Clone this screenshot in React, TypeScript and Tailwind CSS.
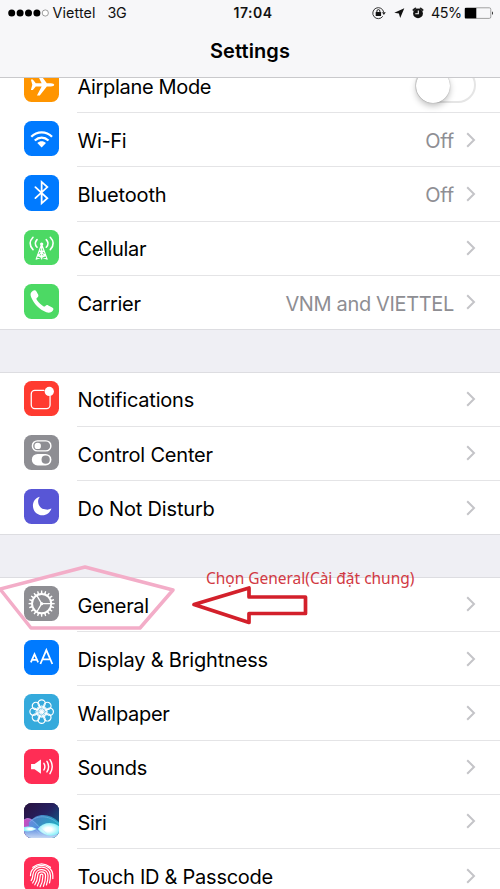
import React from "react";

type RowProps = {
  icon: React.ReactNode;
  label: string;
  tracking: string;
  value?: string;
  valueTracking?: string;
  toggle?: boolean;
  last?: boolean;
};

function Tile({ color, children }: { color: string; children: React.ReactNode }) {
  return (
    <div className={`size-[35.3px] shrink-0 overflow-hidden rounded-[7.5px] ${color}`}>
      <svg viewBox="0 0 36 36" className="block size-full" fill="none" stroke="white" strokeLinecap="round" strokeLinejoin="round">
        {children}
      </svg>
    </div>
  );
}

function Chevron() {
  return (
    <svg viewBox="0 0 10 16" className="block h-4 w-[10px] shrink-0" fill="none">
      <path d="M1.2 1.2 8 8l-6.8 6.8" stroke="#c4c4c8" strokeWidth="2" />
    </svg>
  );
}

function Row({ icon, label, tracking, value, valueTracking, toggle, last }: RowProps) {
  return (
    <li className={`flex pl-6 ${last ? "h-[53.25px]" : "h-[54.25px]"}`}>
      <div className="pt-2">{icon}</div>
      <div className={`ml-[18.2px] flex min-w-0 flex-1 items-center border-[#e4e4e6] pr-6 ${last ? "" : "border-b"}`}>
        <span className={`flex-1 whitespace-nowrap pt-[2.5px] text-[20px] leading-6 text-black ${tracking}`}>{label}</span>
        {value && <span className={`mr-3 whitespace-nowrap pt-[2.5px] text-[20px] leading-6 text-[#8e8e93] ${valueTracking}`}>{value}</span>}
        {toggle ? (
          <div className="flex h-[36px] w-[61px] rounded-full border-2 border-[#e5e5e5] bg-white">
            <div className="-ml-px size-[34px] rounded-full bg-white shadow-[0_3px_6px_rgba(0,0,0,0.25),0_0_1px_rgba(0,0,0,0.4)]" />
          </div>
        ) : (
          <Chevron />
        )}
      </div>
    </li>
  );
}

function Gap() {
  return <div className="h-[43.5px] border-y border-[#dddde1] bg-[#efeff4]" />;
}

const teeth = Array.from({ length: 20 }, (_, i) => i * 18);
const petals = Array.from({ length: 8 }, (_, i) => i * 45);

const Airplane = (
  <Tile color="bg-[#ff9500]">
    <path fill="white" stroke="none" d="M7 12.8h2l3 3.700h6L13.200 6.800h2.900l7.200 9.700h4.100c2 0 3.400.8 3.400 1.700s-1.400 1.700-3.400 1.700h-4.100l-7.200 9.200h-2.900L18 19.900h-6l-3 3.500H7l1.500-5.200z" />
  </Tile>
);
const Wifi = (
  <Tile color="bg-[#007aff]">
    <g strokeWidth="2.300" strokeLinecap="butt">
      <path d="M7.400 16.100c6-6.100 15.200-6.100 21.200 0" />
      <path d="M11 19.900c4.200-4 9.800-4 14 0" />
    </g>
    <path fill="white" stroke="none" d="M13.600 22.500c2.600-2.400 6.200-2.400 8.800 0L18 27z" />
  </Tile>
);
const Bluetooth = (
  <Tile color="bg-[#007aff]">
    <path d="m11.600 12.400 12.200 11.300L18 28.900V7.100l5.800 5.200-12.200 11.300" strokeWidth="1.800" strokeLinejoin="miter" />
  </Tile>
);
const Cellular = (
  <Tile color="bg-[#4cd964]">
    <path d="M13.300 9.800q-3.600 3.900 0 7.800M9.200 7.400q-6 6.300 0 12.600M22.700 9.800q3.600 3.900 0 7.800M26.800 7.400q6 6.300 0 12.600" strokeWidth="1.600" />
    <circle cx="18" cy="14.400" r="1.700" fill="white" stroke="none" />
    <path d="M18 15v14.500M17.400 16l-5 13.700M18.600 16l5 13.700M15.400 21.500h5.200l-6.800 4.800h8.400l-6.800-4.800M13.800 26.300l9.400 3.300M22.200 26.300l-9.400 3.300" strokeWidth="1.150" />
  </Tile>
);
const Phone = (
  <Tile color="bg-[#4cd964]">
    <path
      fill="white"
      stroke="none"
      d="M9.100 6.800c1.400-.9 2.800-.6 3.600.9l1.800 3.300c.5 1.200 0 2.200-1.500 3.300-.6.6-.4 1.300.7 2.900 1.500 2.200 3.800 4.300 6 5.500 1 .5 1.500.3 2.100-.3.9-1 1.800-1.100 3-.5l4 2.100c1.600.9 1.600 2.300.3 3.600-1.600 1.700-3.700 2.100-6.300 1.200C15.600 26 10.200 20.700 7.200 13.300c-1.100-2.900-.4-5.200 1.900-6.500z"
    />
  </Tile>
);
const Notifications = (
  <Tile color="bg-[#ff3b30]">
    <path d="M20.300 9.600H11a3.600 3.600 0 0 0-3.600 3.600v11.300A3.600 3.600 0 0 0 11 28.100h12a3.600 3.600 0 0 0 3.600-3.600v-9" strokeWidth="1.300" />
    <circle cx="25.800" cy="10.600" r="4.700" fill="white" stroke="none" />
  </Tile>
);
const Control = (
  <Tile color="bg-[#8e8e93]">
    <rect x="8.600" y="6" width="18.800" height="10.200" rx="5.100" strokeWidth="1.500" />
    <circle cx="14" cy="11.100" r="3.300" fill="white" stroke="none" />
    <rect x="8" y="19.300" width="20" height="11.700" rx="5.850" fill="white" stroke="none" />
    <circle cx="22.100" cy="25.150" r="4.200" className="fill-[#8e8e93]" stroke="none" />
  </Tile>
);
const Moon = (
  <Tile color="bg-[#5856d6]">
    <path fill="white" stroke="none" d="M16.100 7.800c-4.500 1.400-7.200 5-7 9.600.2 5.400 4.300 9.400 9.700 9.400 4.300 0 7.800-2.600 9.200-6.900-2 1-3.700 1.300-5.400 1.100-4.700-.4-8-3.700-8.200-8.100-.1-1.700.4-3.300 1.700-5.100z" />
  </Tile>
);
const Gear = (
  <Tile color="bg-[#8e8e93]">
    {teeth.map((a) => (
      <path key={a} d="M17.100 7.900 17.400 4.700h1.200l.3 3.200z" fill="white" stroke="none" transform={`rotate(${a} 18 18)`} />
    ))}
    <circle cx="18" cy="18" r="9.800" strokeWidth="2" />
    <circle cx="18" cy="18" r="1.600" fill="white" stroke="none" />
    <path d="m18 18-5-8.500M18 18l-5 8.500M18 18h9.500" strokeWidth="1.300" />
  </Tile>
);
const Display = (
  <Tile color="bg-[#007aff]">
    <g strokeWidth="1.800" strokeLinejoin="miter" strokeLinecap="butt">
      <path d="m7 22.900 3.700-8.500 3.700 8.500M8.300 20.300h4.800" />
      <path d="m16.700 24.500 6.100-14.200 6.100 14.200M18.700 19.700h8.200" />
    </g>
  </Tile>
);
const Wallpaper = (
  <Tile color="bg-[#35aadc]">
    {petals.map((a) => (
      <g key={a} transform={`rotate(${a} 18 18)`}>
        <circle cx="18" cy="9.700" r="3.700" strokeWidth="1.200" />
        <circle cx="18" cy="14.200" r="2.200" strokeWidth=".8" />
      </g>
    ))}
    <circle cx="18" cy="18" r="1.800" fill="white" stroke="none" />
  </Tile>
);
const Sounds = (
  <Tile color="bg-[#ff2d55]">
    <path fill="white" stroke="none" d="M7.200 15.300h3.600l6.500-4.600v14.600l-6.500-4.600H7.200z" />
    <path d="M20.300 14.600q2 3.400 0 6.800M23.400 12.600q3.400 5.400 0 10.800M26.500 10.900q4.600 7.100 0 14.200" strokeWidth="1.500" />
  </Tile>
);
const Siri = (
  <Tile color="bg-[#171638]">
    <defs>
      <linearGradient id="siriSky" x1="0" y1="0" x2="1" y2="1">
        <stop offset="0" stopColor="#2a123f" />
        <stop offset=".45" stopColor="#252060" />
        <stop offset="1" stopColor="#087c99" />
      </linearGradient>
      <linearGradient id="siriLeft" x1="0" y1="0" x2="1" y2=".4">
        <stop offset="0" stopColor="#d64bbd" />
        <stop offset=".6" stopColor="#8062cf" />
        <stop offset="1" stopColor="#3478d5" />
      </linearGradient>
      <linearGradient id="siriRight" x1="0" y1="0" x2="1" y2=".5">
        <stop offset="0" stopColor="#5e8fe5" />
        <stop offset="1" stopColor="#20c3cf" />
      </linearGradient>
      <linearGradient id="siriBase" x1="0" y1="0" x2="0" y2="1">
        <stop offset="0" stopColor="#4a7fdd" />
        <stop offset="1" stopColor="#c9daf4" />
      </linearGradient>
      <radialGradient id="siriGlow">
        <stop offset=".3" stopColor="#ffffff" />
        <stop offset="1" stopColor="#8ef1fa" />
      </radialGradient>
    </defs>
    <g stroke="none">
      <path d="M0 0h36v36H0z" fill="url(#siriSky)" />
      <path d="M0 17c5-4 9 0 14 5l7 14H0z" fill="url(#siriLeft)" />
      <path d="M5 20C13 9.500 26 10 36 20v16H5z" fill="url(#siriRight)" fillOpacity=".8" />
      <path d="M0 27c9-4 22-4 36 0v9H0z" fill="url(#siriBase)" />
      <path d="M14 26.500c6-7.500 15-7.500 22-2.500v6c-7 5.500-15 4-22-3.500z" fill="url(#siriGlow)" />
      <path d="M0 24.500q7-1.500 13 2Q7 30 0 28.500z" fill="url(#siriGlow)" />
    </g>
    <path d="M0 17q5-3 11 3t12 11M6 19c9-8 21-6 30 3M12 27q5 7 14 8" stroke="#a6d2ff" strokeOpacity=".6" strokeWidth=".6" />
  </Tile>
);
const Touch = (
  <Tile color="bg-[#ff2d55]">
    <g strokeWidth="1.250">
      <path d="M9 10.500q9-7.200 18 0" />
      <path d="M6.600 19c0-14 22.800-14 22.800 0v3" />
      <path d="M7.300 24c1.600-2 1.500-3.500 1.700-5.500C9.700 7 26.800 7.800 27 19c0 2.700-.3 5-1 7.500" />
      <path d="M8.900 26.500c2.300-3 2.400-5.600 2.600-8 .8-7.800 12.800-7.200 13 .5.100 3.700-.6 6.600-1.600 9.500" />
      <path d="M11 28.300c2.500-3.700 2.800-6.300 3-9.500.4-5 8-4.600 8 .4 0 4.300-.8 7.500-2.200 10.700" />
      <path d="M13.600 29.500c2.400-4 2.800-7 3-10.700.1-1.800 2.700-1.700 2.700.3-.1 4.400-1 8-2.900 11.300" />
    </g>
  </Tile>
);

function StatusBar() {
  return (
    <div className="flex h-[26px] items-center pl-2 pr-[7px] text-[14.300px] leading-none text-[#111]">
      <div className="flex w-[225.500px] shrink-0 items-center">
        <svg viewBox="0 0 42 10" className="h-[10px] w-[42px]">
          {[3.7, 12.1, 20.5, 28.9].map((x) => (
            <circle key={x} cx={x} cy="5" r="3.500" />
          ))}
          <circle cx="37.300" cy="5" r="3.100" fill="white" stroke="#777" strokeWidth=".7" />
        </svg>
        <span className="ml-[2.500px] w-[55px] tracking-[0.100px]">Viettel</span>
        <span className="tracking-[-0.300px]">3G</span>
      </div>
      <span className="w-[138px] shrink-0 text-[14px] font-semibold tracking-[0.500px]">17:04</span>
      <svg viewBox="0 0 56 16" className="h-4 w-[56px] shrink-0" fill="none" stroke="#222">
        <path d="M10.800 11.300A5.500 5.500 0 1 1 11.700 7.200" strokeWidth=".9" />
        <path d="M10 7.300h3.800L11.900 10z" fill="#222" stroke="none" />
        <rect x="3.700" y="7" width="5.400" height="4.100" rx=".4" fill="#111" stroke="none" />
        <path d="M4.900 7.500V6.100a1.500 1.500 0 0 1 3 0v1.400" />
        <path d="m32.300 3.200-4.100 9.900-1.300-4.600-4.600-.8z" fill="#111" stroke="none" />
        <circle cx="46" cy="8.400" r="4.900" fill="#111" stroke="none" />
        <path d="M41.400 5 43.400 3.400M50.600 5 48.600 3.400" strokeWidth="1.900" strokeLinecap="round" />
        <path d="M46.300 5.400v3.300h-3" stroke="white" strokeWidth="1.100" />
      </svg>
      <span className="ml-[3.500px] w-[33px] shrink-0 tracking-[-0.500px]">45%</span>
      <svg viewBox="0 0 30 12" className="h-3 w-[30px] shrink-0" fill="none">
        <rect x=".8" y=".8" width="26" height="10.600" rx="1.500" stroke="#8a8a8a" strokeWidth=".8" />
        <path d="M1 1h11.300v10.300H1z" fill="black" />
        <path d="M28 4.200q2 1.800 0 3.700z" fill="#222" />
      </svg>
    </div>
  );
}

export default function App() {
  return (
    <main className="relative h-[889px] w-[500px] overflow-hidden bg-white font-['Inter','Liberation_Sans',sans-serif]">
      <header className="relative z-10 h-[78px] border-b border-[#c9c9cc] bg-[#f7f7f9]">
        <StatusBar />
        <h1 className="pt-[13px] text-center text-[20px] font-semibold leading-6 tracking-[0.100px] text-black">Settings</h1>
      </header>

      <ul className="-mt-[19.200px]">
        <Row icon={Airplane} label="Airplane Mode" tracking="tracking-[-0.330px]" toggle />
        <Row icon={Wifi} label="Wi-Fi" tracking="tracking-[-0.300px]" value="Off" valueTracking="tracking-[-0.200px]" />
        <Row icon={Bluetooth} label="Bluetooth" tracking="tracking-[-0.120px]" value="Off" valueTracking="tracking-[-0.200px]" />
        <Row icon={Cellular} label="Cellular" tracking="tracking-[-0.350px]" />
        <Row icon={Phone} label="Carrier" tracking="tracking-[-0.350px]" value="VNM and VIETTEL" valueTracking="tracking-[-0.350px]" last />
      </ul>
      <Gap />
      <ul>
        <Row icon={Notifications} label="Notifications" tracking="tracking-[-0.210px]" />
        <Row icon={Control} label="Control Center" tracking="tracking-[-0.210px]" />
        <Row icon={Moon} label="Do Not Disturb" tracking="tracking-[-0.170px]" last />
      </ul>
      <Gap />
      <ul>
        <Row icon={Gear} label="General" tracking="tracking-[-0.350px]" />
        <Row icon={Display} label="Display & Brightness" tracking="tracking-[-0.190px]" />
        <Row icon={Wallpaper} label="Wallpaper" tracking="tracking-[-0.300px]" />
        <Row icon={Sounds} label="Sounds" tracking="tracking-[-0.300px]" />
        <Row icon={Siri} label="Siri" tracking="tracking-[-0.300px]" />
        <Row icon={Touch} label="Touch ID & Passcode" tracking="tracking-[-0.260px]" />
      </ul>

      <svg viewBox="0 0 320 70" className="absolute left-0 top-[562px] h-[70px] w-[320px]" fill="none" strokeLinejoin="round">
        <path d="M0 27 85 5l88 23-33 38H31z" stroke="#f3adc8" strokeWidth="3.500" />
        <path d="m194 42.500 55-16.500v9h56.500v16.500H249v9z" stroke="#d3202b" strokeWidth="3.700" />
      </svg>
      <p className="absolute left-[206px] top-[567px] whitespace-nowrap font-['Noto_Sans','Open_Sans',sans-serif] text-[15.500px] leading-[22px] tracking-[-0.020px] text-[#d13943]">
        Chọn General(Cài đặt chung)
      </p>
    </main>
  );
}
